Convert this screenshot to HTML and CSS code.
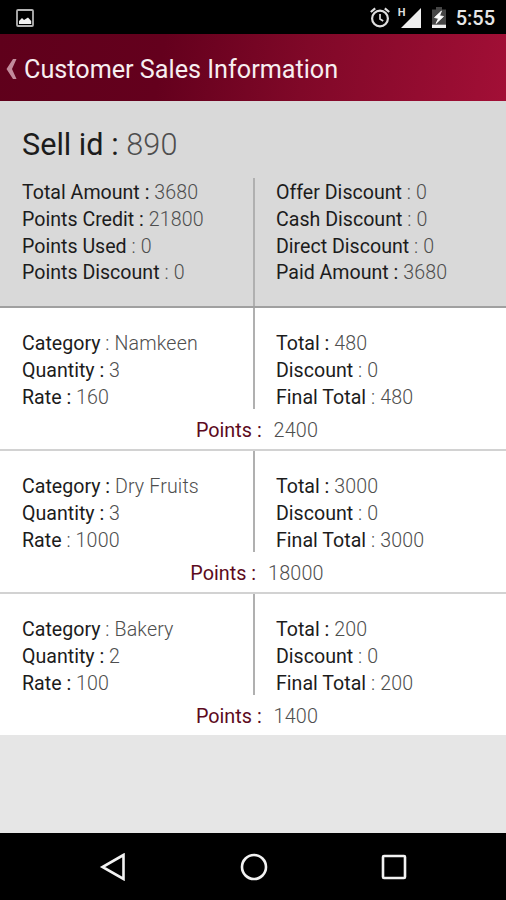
FILE: index.html
```html
<!DOCTYPE html>
<html lang="en">
<head>
  <meta charset="UTF-8">
  <title>Customer Sales Information</title>
  <link rel="stylesheet" href="styles.css">
</head>
<body>
  <div class="status-bar">
    <svg class="ic-picture" width="18" height="18" viewBox="0 0 18 18">
      <rect x="1" y="1" width="16" height="16" rx="1" fill="none" stroke="#b4b4b4" stroke-width="1.8"/>
      <path d="M3 15V12L6 9L8 11L12 8.5L15.2 12V15Z" fill="#f2f2f2"/>
    </svg>
    <div class="status-right">
      <svg class="ic-alarm" width="20" height="21" viewBox="0 0 20 21" fill="none" stroke="#dedede">
        <circle cx="10" cy="11.5" r="7.9" stroke-width="2.2"/>
        <path d="M.8 5L5.2 1.3M19.2 5L14.8 1.3" stroke-width="2.2"/>
        <path d="M10 7V12L13.2 14" stroke-width="1.7"/>
      </svg>
      <span class="network">H</span>
      <svg class="ic-signal" width="20" height="20" viewBox="0 0 20 20"><path d="M0 20L20 0V20Z" fill="#efefef"/></svg>
      <svg class="ic-battery" width="14" height="21" viewBox="0 0 14 21">
        <path d="M0 2.5H4V0H10V2.5H14V17H0Z" fill="#464646"/>
        <path d="M0 17.5H14V21H0Z" fill="#efefef"/>
        <path d="M9.5 4L2.5 10.5L6.5 11.5L4 16.5L11.5 9.5L7.6 8.7Z" fill="#fff" stroke="#fff" stroke-width=".8"/>
      </svg>
      <span class="clock">5:55</span>
    </div>
  </div>

  <header class="app-bar">
    <svg class="ic-back" width="12" height="22" viewBox="0 0 12 22"><path d="M7 1H10.5L6 11L10.5 21H7L.5 11Z" fill="#c28a9b"/></svg>
    <h1>Customer Sales Information</h1>
  </header>

  <main>
    <section class="summary">
      <h2>Sell id : <span>890</span></h2>
      <div class="columns">
        <div class="col">
          <p>Total Amount : <span>3680</span></p>
          <p>Points Credit : <span>21800</span></p>
          <p>Points Used <span>: 0</span></p>
          <p>Points Discount <span>: 0</span></p>
        </div>
        <div class="col">
          <p>Offer Discount <span>: 0</span></p>
          <p>Cash Discount <span>: 0</span></p>
          <p>Direct Discount <span>: 0</span></p>
          <p>Paid Amount : <span>3680</span></p>
        </div>
      </div>
    </section>

    <section class="item">
      <div class="columns">
        <div class="col">
          <p>Category <span>: Namkeen</span></p>
          <p>Quantity : <span>3</span></p>
          <p>Rate : <span>160</span></p>
        </div>
        <div class="col">
          <p>Total : <span>480</span></p>
          <p>Discount <span>: 0</span></p>
          <p>Final Total <span>: 480</span></p>
        </div>
      </div>
      <div class="points">Points : <span>2400</span></div>
    </section>

    <section class="item">
      <div class="columns">
        <div class="col">
          <p>Category : <span>Dry Fruits</span></p>
          <p>Quantity : <span>3</span></p>
          <p>Rate <span>: 1000</span></p>
        </div>
        <div class="col">
          <p>Total : <span>3000</span></p>
          <p>Discount <span>: 0</span></p>
          <p>Final Total <span>: 3000</span></p>
        </div>
      </div>
      <div class="points">Points : <span>18000</span></div>
    </section>

    <section class="item">
      <div class="columns">
        <div class="col">
          <p>Category <span>: Bakery</span></p>
          <p>Quantity : <span>2</span></p>
          <p>Rate : <span>100</span></p>
        </div>
        <div class="col">
          <p>Total : <span>200</span></p>
          <p>Discount <span>: 0</span></p>
          <p>Final Total <span>: 200</span></p>
        </div>
      </div>
      <div class="points">Points : <span>1400</span></div>
    </section>
  </main>

  <nav class="nav-bar">
    <svg width="28" height="28" viewBox="0 0 28 28"><path d="M24.5 2L3.5 14L24.5 26Z"/></svg>
    <svg width="28" height="28" viewBox="0 0 28 28"><circle cx="14" cy="14" r="12"/></svg>
    <svg width="28" height="28" viewBox="0 0 28 28"><rect x="3" y="3" width="22" height="22" rx="1"/></svg>
  </nav>
</body>
</html>
```

FILE: styles.css
```css
* {
  box-sizing: border-box;
}

body {
  margin: 0;
  height: 900px;
  display: flex;
  flex-direction: column;
  overflow: hidden;
  background: #e6e6e6;
  font-family: Roboto, sans-serif;
  color: #1c1c1c;
}

h1, h2, p {
  margin: 0;
  font-weight: 400;
  white-space: nowrap;
}

.status-bar {
  height: 34px;
  flex: none;
  padding: 1px 11px 0 16px;
  display: flex;
  align-items: center;
  justify-content: space-between;
  background: #000;
}

.status-right {
  display: flex;
  align-items: center;
}

.network {
  align-self: flex-start;
  width: 7px;
  margin: 1px -4px 0 8px;
  font-size: 11px;
  line-height: 12px;
  font-weight: 700;
  color: #dedede;
}

.ic-battery {
  margin: 0 10px 0 11px;
}

.clock {
  font-size: 20px;
  font-weight: 500;
  line-height: 24px;
  color: #e6e6e6;
}

.app-bar {
  height: 67px;
  flex: none;
  padding: 3px 0 0 6px;
  display: flex;
  align-items: center;
  background: linear-gradient(100deg, #5f001b 0%, #64001d 32%, #800828 60%, #a20f36 100%);
}

.app-bar h1 {
  margin-left: 6px;
  font-size: 25.2px;
  color: #f7eef0;
}

main {
  flex: 1;
}

.summary {
  height: 207px;
  padding-top: 25px;
  background: #d9d9d9;
  border-bottom: 2px solid #a0a0a0;
}

.summary h2 {
  padding-left: 22px;
  font-size: 30.6px;
  line-height: 37px;
}

.summary .columns {
  height: 128px;
  margin-top: 15px;
}

.summary .col {
  padding-top: 2px;
}

.columns {
  display: flex;
}

.col {
  width: 50%;
  padding-left: 22px;
}

.col + .col {
  border-left: 2px solid #b0b0b0;
  padding-left: 21px;
}

.col p {
  font-size: 19.6px;
  line-height: 26.8px;
}

.col span, h2 span, .points span {
  font-weight: 300;
  letter-spacing: .15px;
  color: #4e4e4e;
}

.item {
  height: 143px;
  background: #fff;
  border-bottom: 2px solid #d2d2d2;
}

.item:last-child {
  height: 141px;
  border-bottom: 0;
}

.item .columns {
  height: 101px;
}

.item .col {
  padding-top: 23px;
}

.points {
  padding: 9px 0 0 8px;
  text-align: center;
  font-size: 19.8px;
  line-height: 26px;
  color: #5c0a20;
}

.points span {
  margin-left: 7px;
}

.nav-bar {
  height: 67px;
  flex: none;
  padding: 0 98px 0 99px;
  display: flex;
  align-items: center;
  justify-content: space-between;
  background: #000;
}

.nav-bar svg {
  fill: none;
  stroke: #f2f2f2;
  stroke-width: 2.6;
}
```
